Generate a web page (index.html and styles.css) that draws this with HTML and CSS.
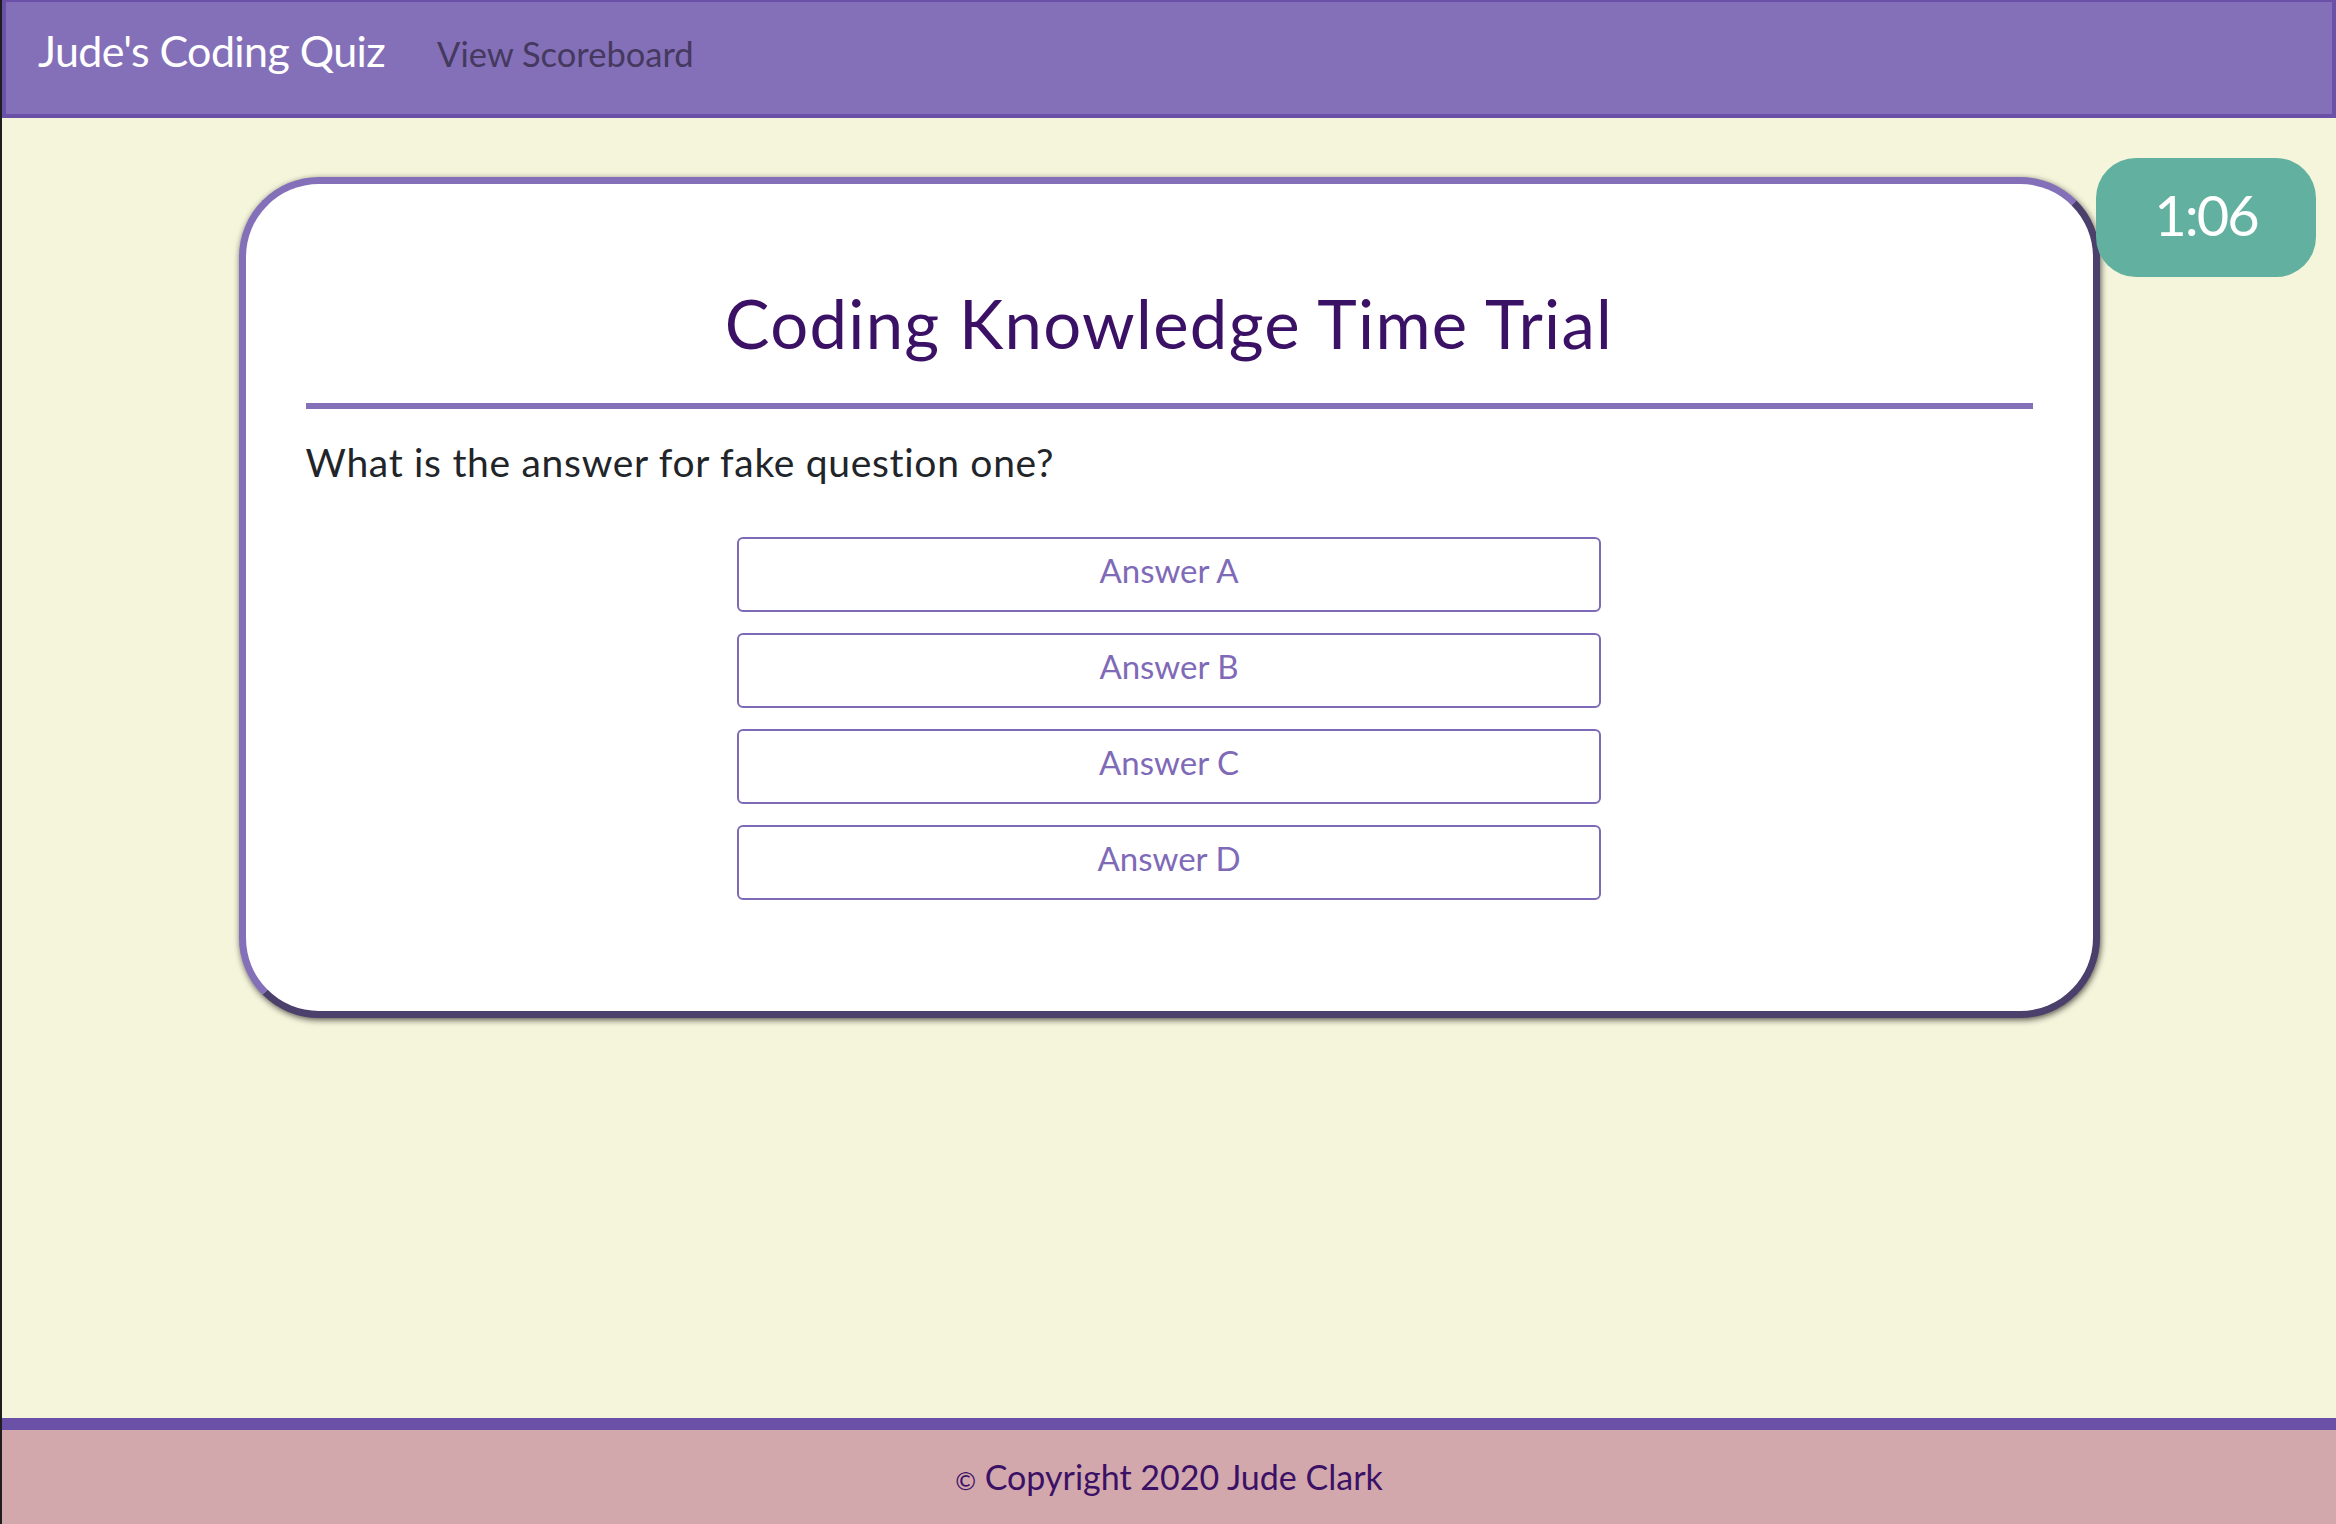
FILE: index.html
```html
<!DOCTYPE html>
<html lang="en">
<head>
<meta charset="utf-8">
<title>Jude's Coding Quiz</title>
<link rel="stylesheet" href="styles.css">
</head>
<body>
<nav class="navbar">
  <a class="brand" href="#">Jude's Coding Quiz</a>
  <a class="nav-link" href="#">View Scoreboard</a>
</nav>
<main class="main">
  <div class="timer">1:06</div>
  <section class="card">
    <h1 class="card-title">Coding Knowledge Time Trial</h1>
    <hr class="divider">
    <p class="question">What is the answer for fake question one?</p>
    <div class="answers">
      <button class="answer">Answer A</button>
      <button class="answer">Answer B</button>
      <button class="answer">Answer C</button>
      <button class="answer">Answer D</button>
    </div>
  </section>
</main>
<footer class="footer">
  <p class="copyright"><span class="copy-mark">©</span> Copyright 2020 Jude Clark</p>
</footer>
</body>
</html>
```
FILE: styles.css
```css
* { box-sizing: border-box; }
html { background: #1e1e1e; }
body {
  margin: 0;
  min-height: 1524px;
  display: flex;
  flex-direction: column;
  background: #f5f5dc;
  border-left: 2px solid #1e1e1e;
  font-family: Lato, "Noto Sans", sans-serif;
  line-height: 1.2;
}
.navbar {
  height: 118px;
  display: flex;
  align-items: baseline;
  gap: 52px;
  padding: 23px 32px 0;
  background: #8470b8;
  border: 4px solid #6a50a6;
  border-top-width: 2px;
}
.brand {
  color: #ffffff;
  font-size: 43px;
  letter-spacing: -0.6px;
  text-decoration: none;
}
.nav-link {
  color: #45395f;
  font-size: 34.5px;
  text-decoration: none;
}
.main {
  flex: 1;
  position: relative;
  padding-top: 59px;
}
.timer {
  position: absolute;
  top: 40px;
  right: 20px;
  width: 220px;
  height: 119px;
  padding-bottom: 5px;
  border-radius: 40px;
  background: #62b1a0;
  color: #ffffff;
  font-size: 56px;
  letter-spacing: -2px;
  display: flex;
  align-items: center;
  justify-content: center;
}
.card {
  width: 1861px;
  margin: 0 auto;
  padding: 99px 60px 111px;
  background: #ffffff;
  border: 7px solid;
  border-color: #8470b8 #4b3f6b #4b3f6b #8470b8;
  border-radius: 80px;
  box-shadow: 1px 2px 6px rgba(0, 0, 0, 0.65);
}
.card-title {
  margin: 0;
  text-align: center;
  font-size: 67px;
  letter-spacing: 1.3px;
  font-weight: 400;
  color: #3b1166;
}
.divider {
  margin: 40px 0 0;
  height: 6px;
  border: 0;
  background: #8470b8;
}
.question {
  margin: 30px 0 0;
  font-size: 39px;
  letter-spacing: 0.7px;
  color: #212529;
}
.answers {
  margin-top: 51px;
  display: flex;
  flex-direction: column;
  align-items: center;
  gap: 21px;
}
.answer {
  width: 50%;
  height: 75px;
  padding: 0 0 8px;
  background: #ffffff;
  border: 2px solid #7f6ab8;
  border-radius: 6px;
  color: #7f6ab8;
  font-family: Lato, "Noto Sans", sans-serif;
  font-size: 33px;
  line-height: 1.2;
  text-align: center;
  display: block;
}
.footer {
  height: 106px;
  border-top: 12px solid #6a50a6;
  background: #d3a8ad;
  padding-top: 27px;
}
.copyright {
  margin: 0;
  text-align: center;
  font-size: 34px;
  color: #3b1166;
}
.copy-mark {
  font-size: 25px;
}
```
